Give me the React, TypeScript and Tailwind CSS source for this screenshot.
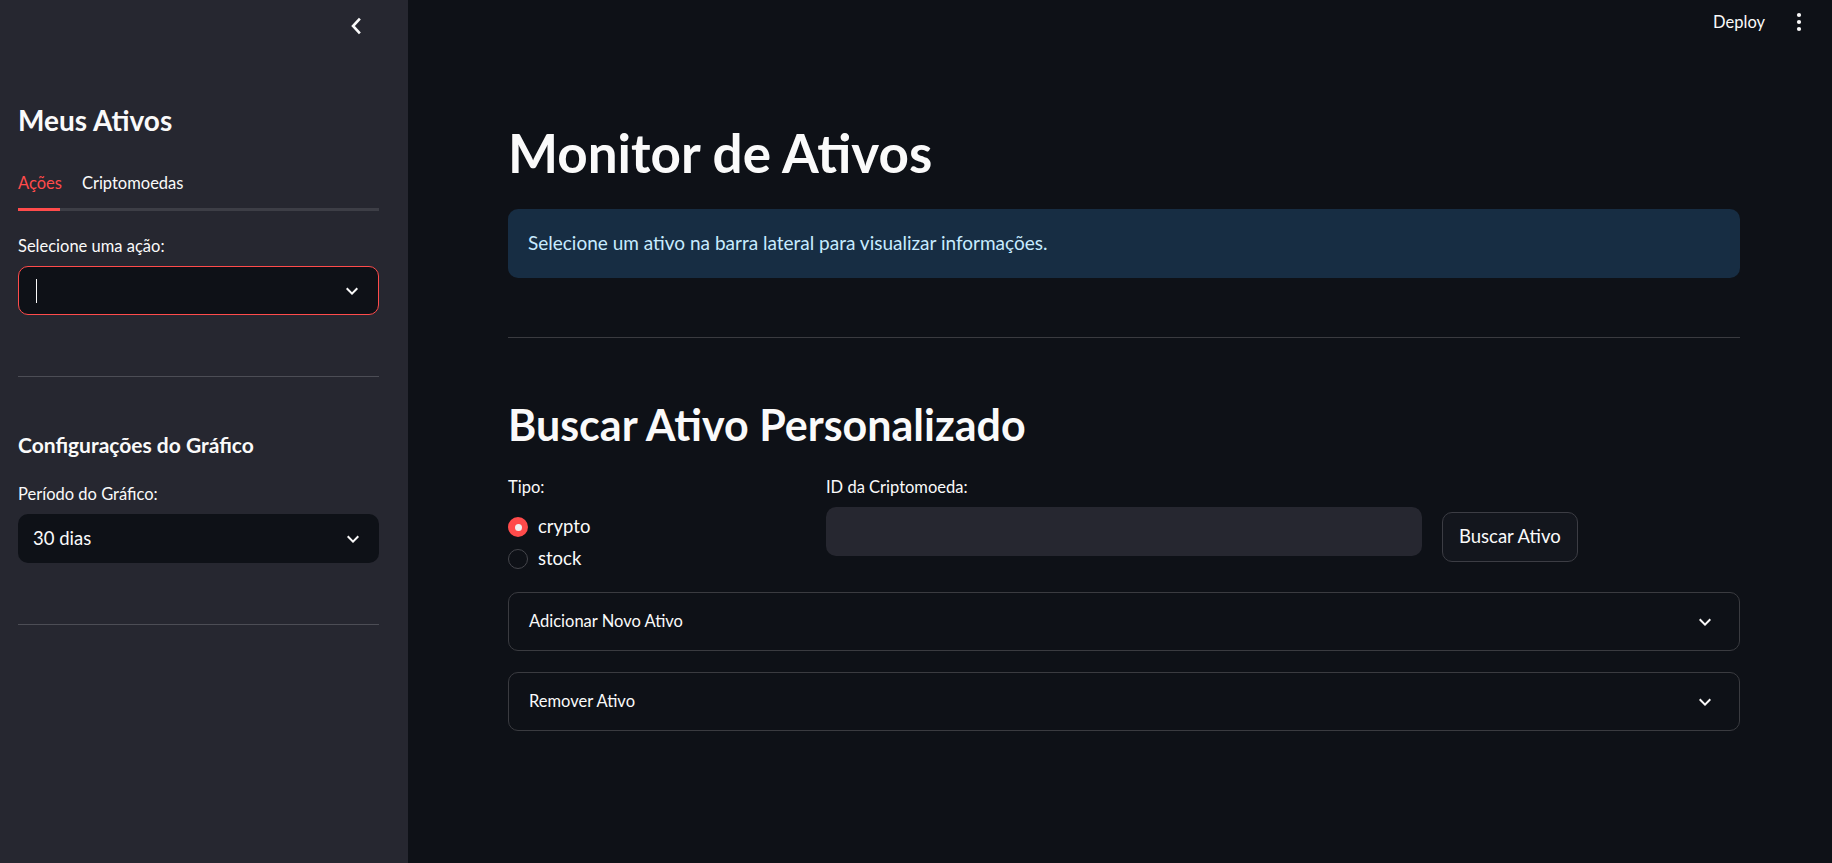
import { useState } from "react";

const sans = "font-['Lato','Liberation_Sans',sans-serif]";

function ExpandMore({ className = "" }: { className?: string }) {
  return (
    <svg viewBox="0 0 24 24" className={className} fill="currentColor">
      <path d="M7.41 8.59 12 13.17l4.59-4.58L18 10l-6 6-6-6z" />
    </svg>
  );
}

function ChevronLeft() {
  return (
    <svg viewBox="0 0 24 24" className="w-[24px] h-[24px]" fill="none" stroke="currentColor" strokeWidth="2.6" strokeLinecap="square">
      <path d="M15 5.5 9 12l6 6.5" />
    </svg>
  );
}

function MoreVert() {
  return (
    <svg viewBox="0 0 24 24" className="w-[24px] h-[24px]" fill="currentColor">
      <circle cx="12" cy="5" r="2.1" />
      <circle cx="12" cy="12" r="2.1" />
      <circle cx="12" cy="19" r="2.1" />
    </svg>
  );
}

function Sidebar() {
  const [tab, setTab] = useState("acoes");
  return (
    <aside className="w-[408px] shrink-0 bg-[#262730] min-h-screen flex flex-col pl-[18px] pr-[29px]">
      <div className="h-[52px] flex items-center justify-end mr-[11px] text-[#fafafa]">
        <ChevronLeft />
      </div>

      <h2 className="mt-[50px] text-[28px] leading-[36px] font-bold text-[#fafafa]">Meus Ativos</h2>

      <div className="mt-[33px]">
        <div className="flex gap-[20px] text-[16.5px] leading-[24px]">
          <button
            onClick={() => setTab("acoes")}
            className={tab === "acoes" ? "text-[#ff4b4b]" : "text-[#fafafa]"}
          >
            Ações
          </button>
          <button
            onClick={() => setTab("cripto")}
            className={tab === "cripto" ? "text-[#ff4b4b]" : "text-[#fafafa]"}
          >
            Criptomoedas
          </button>
        </div>
        <div className="mt-[13px] h-[3px] bg-[#3d3e46] flex">
          <div className="w-[42px] h-full bg-[#ff4b4b]" />
        </div>
      </div>

      <label className="mt-[24px] text-[16.5px] leading-[22px] text-[#fafafa]">Selecione uma ação:</label>
      <div className="mt-[9px] h-[49px] rounded-[10px] border border-[#ff4b4b] bg-[#0e1117] flex items-center pl-[17px] pr-[14px]">
        <div className="w-px h-[24px] bg-[#fafafa]" />
        <div className="flex-1" />
        <ExpandMore className="w-[24px] h-[24px] text-[#fafafa]" />
      </div>

      <div className="mt-[61px] h-px bg-[#4c4d55]" />

      <h3 className="mt-[53px] text-[21px] leading-[30px] font-bold text-[#fafafa]">Configurações do Gráfico</h3>

      <label className="mt-[23px] text-[16.5px] leading-[22px] text-[#fafafa]">Período do Gráfico:</label>
      <div className="mt-[9px] h-[49px] rounded-[10px] bg-[#0e1117] flex items-center pl-[15px] pr-[14px]">
        <span className="text-[18.5px] text-[#fafafa] flex-1">30 dias</span>
        <ExpandMore className="w-[24px] h-[24px] text-[#fafafa]" />
      </div>

      <div className="mt-[61px] h-px bg-[#4c4d55]" />
    </aside>
  );
}

function Radio({ label, checked, onClick }: { label: string; checked: boolean; onClick: () => void }) {
  return (
    <button onClick={onClick} className="flex items-center h-[32px] gap-[10px]">
      {checked ? (
        <span className="w-[20px] h-[20px] rounded-full bg-[#ff4b4b] flex items-center justify-center">
          <span className="w-[7px] h-[7px] rounded-full bg-[#f0f0f0]" />
        </span>
      ) : (
        <span className="w-[20px] h-[20px] rounded-full border-[1.5px] border-[#45464c] bg-[#0e1117]" />
      )}
      <span className="text-[18.5px] text-[#fafafa]">{label}</span>
    </button>
  );
}

function Expander({ title }: { title: string }) {
  return (
    <div className="h-[59px] rounded-[10px] border border-[#3a3b40] flex items-center pl-[20px] pr-[22px]">
      <span className="flex-1 text-[16.5px] text-[#fafafa]">{title}</span>
      <ExpandMore className="w-[24px] h-[24px] text-[#fafafa]" />
    </div>
  );
}

function Main() {
  const [tipo, setTipo] = useState("crypto");
  return (
    <main className="flex-1 min-h-screen bg-[#0e1117] flex flex-col">
      <header className="h-[44px] flex items-center justify-end pr-[21px] gap-[22px] text-[#fafafa]">
        <span className="text-[16.5px]">Deploy</span>
        <MoreVert />
      </header>

      <div className="pl-[100px] pr-[92px] flex flex-col">
        <h1 className="mt-[76px] text-[53px] leading-[66px] font-bold text-[#fafafa]">Monitor de Ativos</h1>

        <div className="mt-[23px] h-[69px] rounded-[10px] bg-[#172d43] flex items-center px-[20px]">
          <span className="text-[19px] text-[#c7ebff]">Selecione um ativo na barra lateral para visualizar informações.</span>
        </div>

        <div className="mt-[59px] h-px bg-[#3a3b40]" />

        <h2 className="mt-[60px] text-[43px] leading-[54px] font-bold text-[#fafafa]">Buscar Ativo Personalizado</h2>

        <div className="mt-[24px] grid grid-cols-[1fr_2fr_1fr] gap-[20px] items-start">
          <div className="flex flex-col">
            <span className="text-[16.5px] leading-[22px] text-[#fafafa]">Tipo:</span>
            <div className="mt-[13px] flex flex-col">
              <Radio label="crypto" checked={tipo === "crypto"} onClick={() => setTipo("crypto")} />
              <Radio label="stock" checked={tipo === "stock"} onClick={() => setTipo("stock")} />
            </div>
          </div>
          <div className="flex flex-col">
            <span className="text-[16.5px] leading-[22px] text-[#fafafa]">ID da Criptomoeda:</span>
            <div className="mt-[9px] h-[49px] rounded-[10px] bg-[#262730]" />
          </div>
          <div className="pt-[36px]">
            <button className="h-[50px] px-[16px] rounded-[10px] border border-[#3c3d44] bg-[#13161d] text-[18.5px] text-[#fafafa]">
              Buscar Ativo
            </button>
          </div>
        </div>

        <div className="mt-[17px] flex flex-col gap-[21px]">
          <Expander title="Adicionar Novo Ativo" />
          <Expander title="Remover Ativo" />
        </div>
      </div>
    </main>
  );
}

export default function App() {
  return (
    <div className={`flex w-full min-h-screen overflow-hidden ${sans}`}>
      <Sidebar />
      <Main />
    </div>
  );
}
